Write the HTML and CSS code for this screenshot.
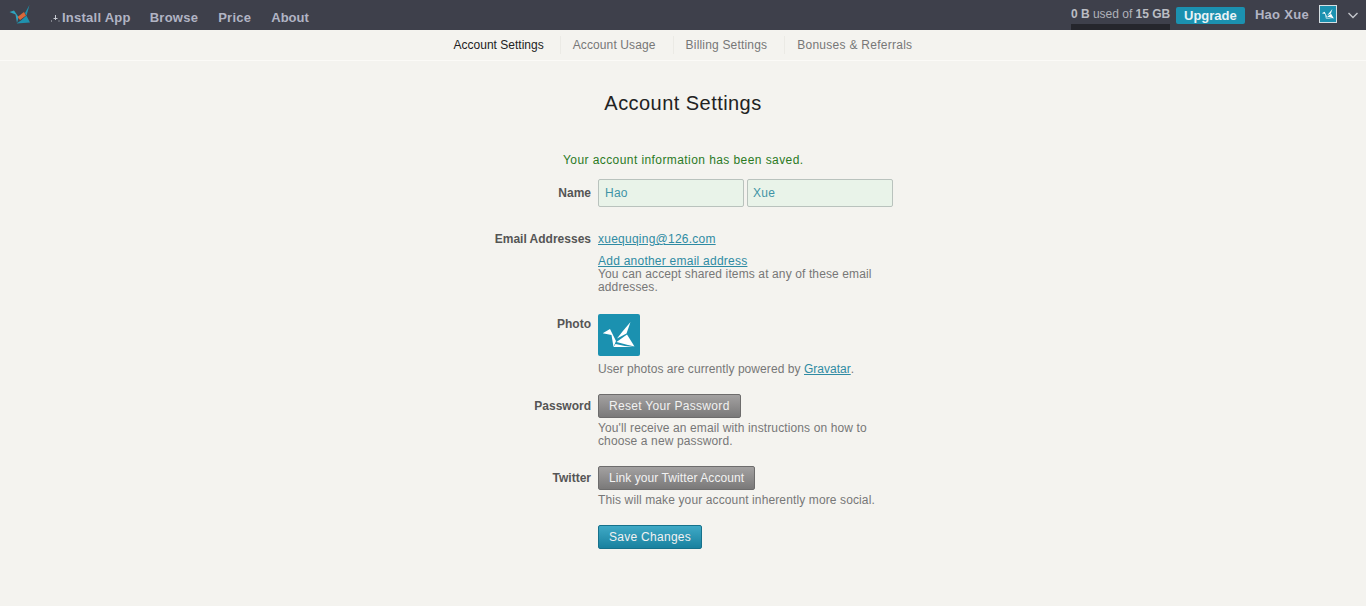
FILE: index.html
```html
<!DOCTYPE html>
<html lang="en">
<head>
<meta charset="utf-8">
<title>Account Settings</title>
<link rel="stylesheet" href="styles.css">
</head>
<body>
<header class="topbar">
  <div class="topbar-left">
    <svg class="logo" viewBox="0 0 24 24" width="24" height="24" aria-hidden="true">
      <polygon points="0.500,9 5,7.500 9.500,14 8,20 6.500,11.500" fill="#2ea3bd"/>
      <polygon points="8.500,14 15,9 17,12.500 11,17" fill="#d9683a"/>
      <polygon points="20.500,2 16,10 21,19.500 7.500,20.500 12,17.500 17.500,12.500" fill="#1f92ae"/>
    </svg>
    <nav class="mainnav">
      <a class="mainnav-item install" href="#"><svg class="install-icon" viewBox="0 0 10 8" width="10" height="8" aria-hidden="true"><path d="M5.500 1v5M3.500 4.500h4M1 7h1M8.500 7h1" stroke="#c5c8d0" fill="none"/></svg>Install App</a>
      <a class="mainnav-item" href="#">Browse</a>
      <a class="mainnav-item" href="#">Price</a>
      <a class="mainnav-item about" href="#">About</a>
    </nav>
  </div>
  <div class="topbar-right">
    <div class="usage"><span><b>0 B</b> used of <b>15 GB</b></span></div>
    <a class="upgrade" href="#">Upgrade</a>
    <span class="username">Hao Xue</span>
    <span class="avatar-small">
      <svg viewBox="0 0 42 42" width="16" height="16" aria-hidden="true"><use href="#crane"/></svg>
    </span>
    <svg class="chevron" viewBox="0 0 10 7" width="10" height="7" aria-hidden="true"><path d="M0.500 1l4.500 4.500 4.500-4.500" fill="none" stroke="#c3c5cb" stroke-width="1.400"/></svg>
  </div>
</header>

<nav class="subnav">
  <a class="subnav-item active" href="#">Account Settings</a>
  <a class="subnav-item" href="#">Account Usage</a>
  <a class="subnav-item billing" href="#">Billing Settings</a>
  <a class="subnav-item" href="#">Bonuses &amp; Referrals</a>
</nav>

<main class="content">
  <h1 class="title">Account Settings</h1>
  <form class="form">
    <p class="saved">Your account information has been saved.</p>

    <div class="row row-name">
      <label class="label label-name">Name</label>
      <div class="field name-inputs">
        <input class="input input-first" value="Hao">
        <input class="input input-last" value="Xue">
      </div>
    </div>

    <div class="row row-email">
      <label class="label">Email Addresses</label>
      <div class="field">
        <a class="link email" href="#">xuequqing@126.com</a>
        <a class="link add-email" href="#">Add another email address</a>
        <p class="help">You can accept shared items at any of these email addresses.</p>
      </div>
    </div>

    <div class="row row-photo">
      <label class="label label-photo">Photo</label>
      <div class="field">
        <svg class="photo" viewBox="0 0 42 42" width="42" height="42" aria-hidden="true">
          <defs>
            <g id="crane">
              <rect width="42" height="42" fill="#1b91b0"/>
              <polygon points="4.700,19.300 12,15 18,27 15.500,33 13.500,21" fill="#fff"/>
              <polygon points="32.500,8 28.500,19.500 19,24.500 24.500,17.500" fill="#fff"/>
              <polygon points="18.500,28 29,20.500 36.500,32.500 28,30.500" fill="#fff"/>
              <polygon points="17.500,30 27,32 36,33 15.500,33" fill="#fff"/>
            </g>
          </defs>
          <use href="#crane"/>
        </svg>
        <p class="help help-photo">User photos are currently powered by <a class="link inline" href="#">Gravatar</a>.</p>
      </div>
    </div>

    <div class="row row-password">
      <label class="label label-btn">Password</label>
      <div class="field">
        <button class="btn btn-gray btn-reset" type="button">Reset Your Password</button>
        <p class="help help-btn">You'll receive an email with instructions on how to choose a new password.</p>
      </div>
    </div>

    <div class="row row-twitter">
      <label class="label label-btn">Twitter</label>
      <div class="field">
        <button class="btn btn-gray btn-twitter" type="button">Link your Twitter Account</button>
        <p class="help help-btn">This will make your account inherently more social.</p>
      </div>
    </div>

    <div class="row row-save">
      <span class="label"></span>
      <div class="field">
        <button class="btn btn-blue" type="button">Save Changes</button>
      </div>
    </div>
  </form>
</main>
</body>
</html>
```
FILE: styles.css
```css
* { box-sizing: border-box; }
html, body { margin: 0; height: 100%; }
body {
  background: #f4f3ef;
  font-family: "Liberation Sans", Arial, sans-serif;
  font-size: 12px;
  color: #777;
  overflow: hidden;
}
a { text-decoration: none; }
p { margin: 0; }

.topbar {
  height: 30px;
  background: #3e404b;
  display: flex;
  justify-content: space-between;
  align-items: center;
}
.topbar-left { display: flex; align-items: center; padding-left: 9px; }
.logo { display: block; margin-top: -1px; }
.mainnav { display: flex; margin-left: 17px; padding-top: 4px; }
.mainnav-item {
  color: #b1b4c4;
  font-size: 13px;
  font-weight: bold;
  margin-right: 20px;
  letter-spacing: 0.25px;
  white-space: nowrap;
}
.install { display: flex; align-items: center; margin-right: 19px; }
.about { letter-spacing: 0; }
.install-icon { margin-right: 2px; margin-top: 2px; }

.topbar-right { display: flex; align-items: center; height: 30px; }
.usage {
  width: 99px;
  height: 30px;
  padding-top: 7px;
  color: #b0b2b9;
  font-size: 12px;
  white-space: nowrap;
  border-bottom: 6px solid #25262c;
}
.usage b { color: #bbbdc3; }
.upgrade {
  margin-left: 6px;
  margin-top: 1px;
  width: 69px;
  height: 17px;
  line-height: 17px;
  text-align: center;
  background: #1b91b0;
  border-radius: 2px;
  color: #e8f3f6;
  font-size: 13px;
  font-weight: bold;
}
.username {
  margin-left: 10px;
  margin-top: -2px;
  color: #b1b4c4;
  font-size: 13px;
  font-weight: bold;
  letter-spacing: 0.3px;
  white-space: nowrap;
}
.avatar-small {
  margin-left: 10px;
  margin-top: -2px;
  width: 18px;
  height: 18px;
  border: 1px solid #d5dfe3;
  background: #1b91b0;
  display: block;
}
.avatar-small svg { display: block; }
.chevron { margin-left: 11px; margin-right: 8px; }

.subnav {
  height: 31px;
  display: flex;
  justify-content: center;
  align-items: center;
  border-bottom: 1px solid #fbfaf7;
}
.subnav-item {
  color: #777;
  padding: 0 17px 0 12px;
  height: 18px;
  line-height: 18px;
  margin-top: -1px;
  border-right: 1px solid #ebeae5;
  letter-spacing: 0.01em;
}
.subnav-item:first-child { padding-left: 0; padding-right: 16px; letter-spacing: 0; }
.subnav-item:last-child { border-right: 0; padding-right: 0; letter-spacing: 0.27px; }
.subnav-item.active { color: #222; }
.billing { letter-spacing: 0.18px; }

.content { display: flex; flex-direction: column; align-items: center; }
.title {
  margin: 30px 0 0;
  font-size: 20px;
  line-height: 24px;
  font-weight: normal;
  color: #222;
  letter-spacing: 0.45px;
}
.form { width: 400px; margin-top: 38px; margin-left: 16px; }
.saved { color: #2b7a1f; margin-left: 72px; line-height: 14px; letter-spacing: 0.42px; }

.row { display: flex; align-items: flex-start; }
.label {
  width: 107px;
  flex: none;
  text-align: right;
  padding-right: 7px;
  font-weight: bold;
  color: #555;
  line-height: 14px;
  white-space: nowrap;
}
.field { width: 295px; flex: none; }

.row-name { margin-top: 12px; }
.label-name { padding-top: 7px; }
.label-photo { padding-top: 3px; }
.name-inputs { display: flex; gap: 3px; }
.input {
  height: 28px;
  border: 1px solid #b9c2bd;
  border-radius: 2px;
  background: #e9f3e9;
  color: #3f93a6;
  font: 12px "Liberation Sans", Arial, sans-serif;
  padding: 0 6px;
  letter-spacing: 0.02em;
  outline: 0;
  margin: 0;
}
.input-first { width: 146px; }
.input-last { width: 146px; padding-left: 5px; }

.link { color: #2f8ba3; text-decoration: underline; letter-spacing: 0.02em; }
.email, .add-email { display: block; line-height: 14px; }
.help { line-height: 13px; letter-spacing: 0.12px; }
.inline { letter-spacing: 0; }

.row-email { margin-top: 25px; }
.add-email { margin-top: 8px; }

.row-photo { margin-top: 20px; }
.photo { display: block; border-radius: 2px; }
.help-photo { margin-top: 6px; line-height: 14px; letter-spacing: 0.07px; }

.row-password { margin-top: 18px; }
.label-btn { padding-top: 5px; }
.btn {
  display: block;
  height: 24px;
  padding: 0 10px;
  border-radius: 2px;
  font: 12px "Liberation Sans", Arial, sans-serif;
  letter-spacing: 0.28px;
  color: #f2f2f2;
  cursor: pointer;
}
.btn-gray {
  border: 1px solid #6d6c6c;
  background: linear-gradient(#a3a1a1, #7a7979);
}
.btn-reset { letter-spacing: 0.31px; }
.btn-twitter { letter-spacing: 0.08px; }
.btn-blue {
  border: 1px solid #16718b;
  background: linear-gradient(#3fa9c6, #19819f);
}
.help-btn { margin-top: 4px; }

.row-twitter { margin-top: 18px; }
.row-save { margin-top: 18px; }
```
